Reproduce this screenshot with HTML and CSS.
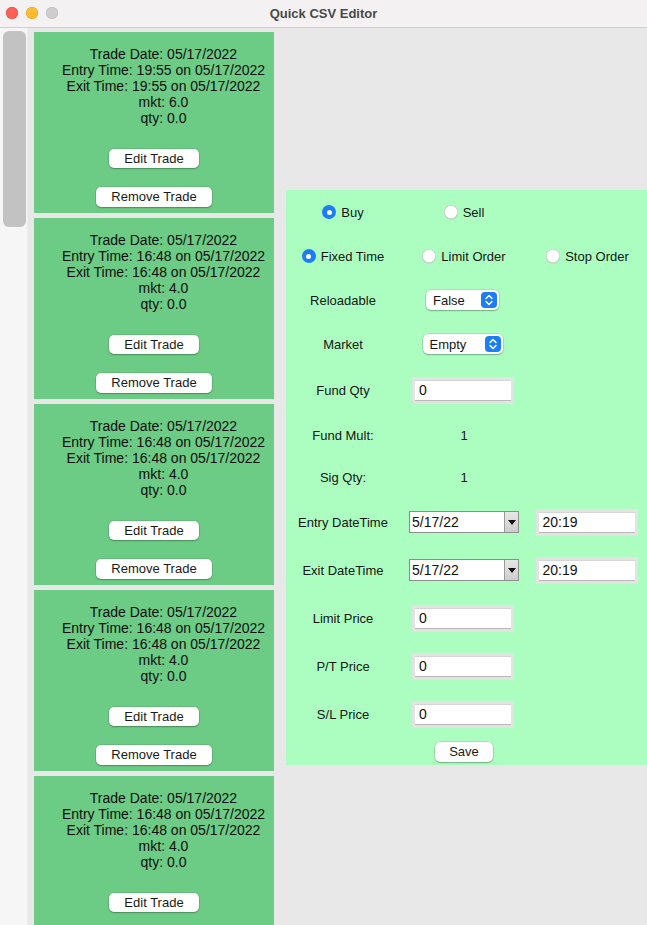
FILE: index.html
```html
<!DOCTYPE html>
<html>
<head>
<meta charset="utf-8">
<title>Quick CSV Editor</title>
<link rel="stylesheet" href="styles.css">
</head>
<body>
<div class="window">
  <div class="titlebar">
    <div class="lights">
      <span class="light red"></span>
      <span class="light yellow"></span>
      <span class="light gray"></span>
    </div>
    <div class="title">Quick CSV Editor</div>
  </div>
  <div class="main">
    <div class="gutter"><div class="thumb"></div></div>
    <div class="list">
      <div class="card">
        <div class="info">
          <div>Trade Date: 05/17/2022</div>
          <div>Entry Time: 19:55 on 05/17/2022</div>
          <div>Exit Time: 19:55 on 05/17/2022</div>
          <div>mkt: 6.0</div>
          <div>qty: 0.0</div>
        </div>
        <button class="btn edit">Edit Trade</button>
        <button class="btn remove">Remove Trade</button>
      </div>
      <div class="card">
        <div class="info">
          <div>Trade Date: 05/17/2022</div>
          <div>Entry Time: 16:48 on 05/17/2022</div>
          <div>Exit Time: 16:48 on 05/17/2022</div>
          <div>mkt: 4.0</div>
          <div>qty: 0.0</div>
        </div>
        <button class="btn edit">Edit Trade</button>
        <button class="btn remove">Remove Trade</button>
      </div>
      <div class="card">
        <div class="info">
          <div>Trade Date: 05/17/2022</div>
          <div>Entry Time: 16:48 on 05/17/2022</div>
          <div>Exit Time: 16:48 on 05/17/2022</div>
          <div>mkt: 4.0</div>
          <div>qty: 0.0</div>
        </div>
        <button class="btn edit">Edit Trade</button>
        <button class="btn remove">Remove Trade</button>
      </div>
      <div class="card">
        <div class="info">
          <div>Trade Date: 05/17/2022</div>
          <div>Entry Time: 16:48 on 05/17/2022</div>
          <div>Exit Time: 16:48 on 05/17/2022</div>
          <div>mkt: 4.0</div>
          <div>qty: 0.0</div>
        </div>
        <button class="btn edit">Edit Trade</button>
        <button class="btn remove">Remove Trade</button>
      </div>
      <div class="card">
        <div class="info">
          <div>Trade Date: 05/17/2022</div>
          <div>Entry Time: 16:48 on 05/17/2022</div>
          <div>Exit Time: 16:48 on 05/17/2022</div>
          <div>mkt: 4.0</div>
          <div>qty: 0.0</div>
        </div>
        <button class="btn edit">Edit Trade</button>
      </div>
    </div>
    <div class="editor">
      <label class="radio c0"><span class="dot on"></span>Buy</label>
      <label class="radio c1"><span class="dot"></span>Sell</label>
      <span class="filler"></span>

      <label class="radio c0"><span class="dot on"></span>Fixed Time</label>
      <label class="radio c1"><span class="dot"></span>Limit Order</label>
      <label class="radio c2"><span class="dot"></span>Stop Order</label>

      <span class="lbl c0">Reloadable</span>
      <div class="popup w73"><span>False</span><span class="stepper"><svg viewBox="0 0 16 16" width="16" height="16"><path d="M5 6.5 L8 3.5 L11 6.5 M5 9.5 L8 12.5 L11 9.5" fill="none" stroke="#fff" stroke-width="1.5" stroke-linecap="round" stroke-linejoin="round"/></svg></span></div>
      <span class="filler"></span>

      <span class="lbl c0">Market</span>
      <div class="popup w80"><span>Empty</span><span class="stepper"><svg viewBox="0 0 16 16" width="16" height="16"><path d="M5 6.5 L8 3.5 L11 6.5 M5 9.5 L8 12.5 L11 9.5" fill="none" stroke="#fff" stroke-width="1.5" stroke-linecap="round" stroke-linejoin="round"/></svg></span></div>
      <span class="filler"></span>

      <span class="lbl c0">Fund Qty</span>
      <div class="entry">0</div>
      <span class="filler"></span>

      <span class="lbl c0">Fund Mult:</span>
      <span class="lbl">1</span>
      <span class="filler"></span>

      <span class="lbl c0">Sig Qty:</span>
      <span class="lbl">1</span>
      <span class="filler"></span>

      <span class="lbl c0">Entry DateTime</span>
      <div class="date"><span class="dval">5/17/22</span><span class="darrow"><svg viewBox="0 0 8 5" width="8" height="5"><path d="M0 0 H8 L4 5 Z" fill="#111"/></svg></span></div>
      <div class="entry">20:19</div>

      <span class="lbl c0">Exit DateTime</span>
      <div class="date"><span class="dval">5/17/22</span><span class="darrow"><svg viewBox="0 0 8 5" width="8" height="5"><path d="M0 0 H8 L4 5 Z" fill="#111"/></svg></span></div>
      <div class="entry">20:19</div>

      <span class="lbl c0">Limit Price</span>
      <div class="entry">0</div>
      <span class="filler"></span>

      <span class="lbl c0">P/T Price</span>
      <div class="entry">0</div>
      <span class="filler"></span>

      <span class="lbl c0">S/L Price</span>
      <div class="entry">0</div>
      <span class="filler"></span>

      <span class="filler"></span>
      <button class="btn save">Save</button>
      <span class="filler"></span>
    </div>
  </div>
</div>
</body>
</html>
```

FILE: styles.css
```css
* { box-sizing: border-box; }
html, body {
  margin: 0;
  padding: 0;
  width: 647px;
  height: 925px;
  overflow: hidden;
  font-family: "Liberation Sans", Arial, sans-serif;
  color: #151515;
}
.window {
  width: 647px;
  height: 925px;
  display: flex;
  flex-direction: column;
  background: #e8e8e8;
}
.titlebar {
  height: 28px;
  flex: none;
  background: #f3f1f1;
  border-bottom: 1px solid #cfcdcd;
  display: flex;
  align-items: center;
  justify-content: center;
  position: relative;
}
.lights {
  position: absolute;
  left: 6px;
  top: 7px;
  display: flex;
  gap: 8px;
}
.light {
  width: 12px;
  height: 12px;
  border-radius: 50%;
  display: block;
}
.red { background: #fe5f57; box-shadow: inset 0 0 0 0.5px #e0443e; }
.yellow { background: #febc2e; box-shadow: inset 0 0 0 0.5px #dea123; }
.gray { background: #cecdcd; box-shadow: inset 0 0 0 0.5px #b9b8b8; }
.title {
  font-weight: bold;
  font-size: 13px;
  color: #4a4848;
  margin-top: -1px;
}
.main {
  flex: 1;
  display: flex;
  align-items: flex-start;
  overflow: hidden;
}
.gutter {
  width: 28px;
  align-self: stretch;
  flex: none;
  background: #f6f6f6;
  border-right: 1px solid #ececec;
  padding: 3px 0 0 3px;
}
.thumb {
  width: 23px;
  height: 196px;
  background: #c2c2c2;
  border-radius: 6px;
}
.list {
  flex: none;
  display: flex;
  flex-direction: column;
  gap: 5px;
  padding: 4px 0 0 6px;
}
.card {
  width: 240px;
  height: 181px;
  flex: none;
  background: #6ccb84;
  display: flex;
  flex-direction: column;
  align-items: center;
  padding-top: 14px;
}
.info {
  text-align: center;
  font-size: 14px;
  line-height: 16px;
  color: #0e0e0e;
  padding-left: 19px;
}
.btn {
  font-family: "Liberation Sans", Arial, sans-serif;
  font-size: 13px;
  color: #1a1a1a;
  background: #fff;
  border: none;
  border-radius: 5px;
  padding: 0 15px;
  height: 20px;
  line-height: 20px;
  box-shadow: 0 0 0 0.5px rgba(0,0,0,0.15), 0 1px 1.5px rgba(0,0,0,0.25);
}
.edit { margin-top: 23px; height: 19px; line-height: 19px; }
.remove { margin-top: 19px; }

.editor {
  flex: none;
  margin: 162px 0 0 12px;
  width: 361px;
  height: 575px;
  background: #abfebf;
  display: grid;
  grid-template-columns: 114px 128px 119px;
  grid-template-rows: 44px 44px 44px 44px 48px 42px 42px 48px 48px 48px 48px 48px 27px;
  align-items: center;
  justify-items: center;
  font-size: 13px;
}
.lbl { color: #151515; }
.radio {
  display: inline-flex;
  align-items: center;
  gap: 5px;
  color: #151515;
}
.dot {
  width: 14px;
  height: 14px;
  border-radius: 50%;
  background: #fff;
  box-shadow: inset 0 0 0 0.5px #b8b8b8, 0 0.5px 1px rgba(0,0,0,0.15);
  display: inline-block;
  position: relative;
}
.dot.on {
  background: #1b7ef7;
  box-shadow: none;
}
.dot.on::after {
  content: "";
  position: absolute;
  left: 4.5px;
  top: 4.5px;
  width: 5px;
  height: 5px;
  border-radius: 50%;
  background: #fff;
}
.popup {
  height: 20px;
  background: #fff;
  border-radius: 5px;
  box-shadow: 0 0 0 0.5px rgba(0,0,0,0.15), 0 1px 1.5px rgba(0,0,0,0.25);
  display: flex;
  align-items: center;
  justify-content: space-between;
  padding: 0 2px 0 7px;
  color: #151515;
}
.w73 { width: 73px; margin-left: -3px; }
.w80 { width: 80px; margin-left: -3px; }
.stepper {
  width: 16px;
  height: 16px;
  border-radius: 4px;
  background: #1b7ef7;
  display: flex;
}
.entry {
  width: 102px;
  height: 27px;
  border: 3px solid #e3e3e3;
  background: #fff;
  box-shadow: inset 0 1px 0 #d6d6d6, inset 0 -1px 0 #b9b9b9;
  font-size: 14px;
  line-height: 21px;
  padding-left: 4px;
  color: #111;
  margin-left: -2px;
}
.date {
  width: 110px;
  height: 22px;
  border: 1px solid #8e8e8e;
  background: #fff;
  display: flex;
  align-items: stretch;
  font-size: 14px;
}
.dval {
  flex: 1;
  line-height: 20px;
  padding-left: 2px;
  color: #111;
}
.darrow {
  width: 14px;
  background: linear-gradient(#e8e8e8, #cdcdcd);
  border-left: 1px solid #9a9a9a;
  display: flex;
  align-items: center;
  justify-content: center;
}
.save { height: 20px; padding: 0 14px; }
```
